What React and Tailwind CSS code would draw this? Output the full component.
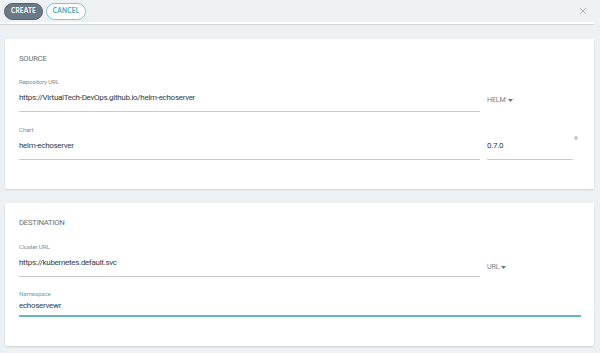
import { X } from 'lucide-react'

const fontRoboto = { fontFamily: 'Roboto, "Liberation Sans", sans-serif' }

function Field({ label, value, focused = false, className = '' }) {
  return (
    <div className={className}>
      <div
        className={
          'h-[10px] text-[6.2px] leading-[10px] tracking-[-0.15px] ' +
          (focused ? 'text-[#5aaebd]' : 'text-[#878d93]')
        }
      >
        {label}
      </div>
      <div
        className={
          focused
            ? 'h-[18px] border-b-2 border-[#68b6c2] text-[8px] leading-[14px] tracking-[-0.3px] text-[#363b42]'
            : 'mt-[4px] h-[21px] border-b border-[#cacaca] pb-[6px] text-[8px] leading-[14px] tracking-[-0.3px] text-[#363b42]'
        }
      >
        {value}
      </div>
    </div>
  )
}

function Dropdown({ text }) {
  return (
    <div className="flex items-center gap-[2px] text-[7.2px] tracking-[-0.2px] text-[#7a838d]">
      <span>{text}</span>
      <svg width="5" height="3" viewBox="0 0 5 3">
        <path d="M0 0h5L2.5 3z" fill="#6f7882" />
      </svg>
    </div>
  )
}

export default function App() {
  return (
    <div className="h-[353px] w-[600px] overflow-hidden bg-[#eef1f4]" style={fontRoboto}>
      <div className="flex h-[22px] items-center justify-between pl-[4px] pr-[12px]">
        <div className="flex items-center gap-[3px]" style={{ fontFamily: 'Lato, "Liberation Sans", sans-serif' }}>
          <button className="flex h-[17px] w-[39px] items-center justify-center rounded-full border border-[#56626d] bg-[#6b7885] text-[6.5px] font-bold tracking-[0.2px] text-white">
            CREATE
          </button>
          <button className="flex h-[17px] w-[40px] items-center justify-center rounded-full border border-[#7cc6ce] bg-white text-[6.5px] font-bold tracking-[0.2px] text-[#4aa6b3]">
            CANCEL
          </button>
        </div>
        <X size={10} strokeWidth={1.5} className="text-[#8c97a3]" />
      </div>
      <div className="mr-[6px] h-[2px] bg-white shadow-[0_1px_1px_rgba(0,0,0,0.12)]" />

      <div className="ml-[5px] mr-[6px] mt-[15px] h-[150px] rounded-[2px] bg-white px-[14px] pt-[14px] shadow-[0_1px_2px_rgba(0,0,0,0.12)]">
        <div className="h-[12px] text-[7.8px] leading-[12px] tracking-[-0.3px] text-[#6b7178]">SOURCE</div>
        <div className="mt-[12px] flex items-end">
          <Field className="w-[461px]" label="Repository URL" value="https://VirtualTech-DevOps.github.io/helm-echoserver" />
          <div className="mb-[6px] ml-[7px]">
            <Dropdown text="HELM" />
          </div>
        </div>
        <div className="mt-[13px] flex items-start">
          <Field className="w-[461px]" label="Chart" value="helm-echoserver" />
          <Field className="ml-[7px] w-[86px]" label="" value="0.7.0" />
          <div className="ml-[1px] mt-[11px] h-[4px] w-[4px] rounded-full border border-[#bfc4c9] bg-[#d4d8dc]" />
        </div>
      </div>

      <div className="ml-[5px] mr-[6px] mt-[14px] h-[143px] rounded-[2px] bg-white px-[14px] pt-[14px] shadow-[0_1px_2px_rgba(0,0,0,0.12)]">
        <div className="h-[12px] text-[7.8px] leading-[12px] tracking-[-0.3px] text-[#6b7178]">DESTINATION</div>
        <div className="mt-[13px] flex items-end">
          <Field className="w-[461px]" label="Cluster URL" value="https://kubernetes.default.svc" />
          <div className="mb-[4px] ml-[7px]">
            <Dropdown text="URL" />
          </div>
        </div>
        <Field className="mt-[12px] w-[562px]" label="Namespace" value="echoservewr" focused />
      </div>
    </div>
  )
}
